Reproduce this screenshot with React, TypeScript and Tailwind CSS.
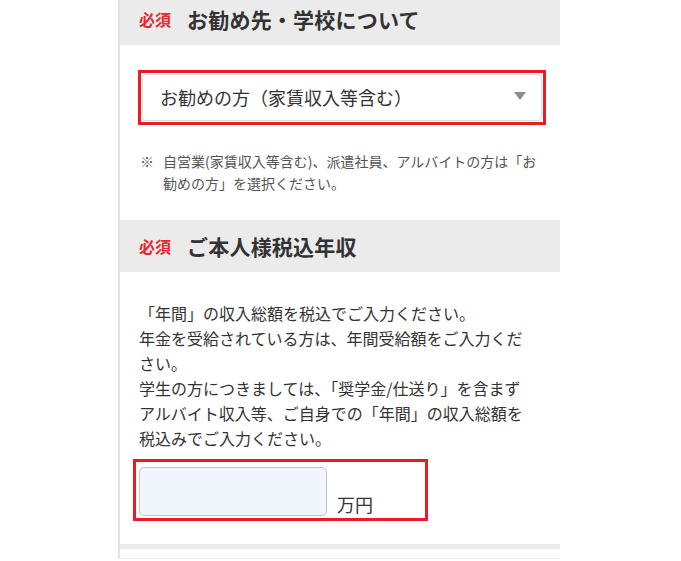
const font = { fontFamily: '"Noto Sans CJK JP", "Noto Sans", sans-serif' };

function SectionHeader({ title }: { title: string }) {
  return (
    <div className="flex h-[52px] items-center bg-[#ebebeb] pl-[19px]">
      <span className="text-[16px] font-bold leading-none text-[#e8262c]">必須</span>
      <h2 className="ml-[16px] text-[21px] font-bold leading-none tracking-[0.01em] text-[#333]">{title}</h2>
    </div>
  );
}

export default function App() {
  return (
    <div className="min-h-[561px] overflow-hidden bg-white" style={font}>
      <div className="ml-[118px] w-[442px] border-l-2 border-[#e4e4e4]">
        {/* 勤め先 */}
        <section className="-mt-[7px]">
          <SectionHeader title="お勧め先・学校について" />
          <div className="pt-[25px] pb-[26px]">
            <div className="ml-[18px] w-[408px] border-[3px] border-[#e81c24] p-[1px]">
              <div className="flex h-[47px] items-center justify-between rounded-[4px] border border-[#dcdcdc] bg-white pl-[17px] pr-[14px]">
                <span className="text-[18px] text-[#333]">お勧めの方（家賃収入等含む）</span>
                <svg width="14" height="10" viewBox="0 0 14 10" className="mt-[-4px]">
                  <path d="M1 1h12L7 9z" fill="#8c8c8c" />
                </svg>
              </div>
            </div>
            <div className="mt-[25px] flex pl-[20px] text-[14px] leading-[22px] text-[#555]">
              <span className="w-[23px] shrink-0">※</span>
              <p>
                自営業(家賃収入等含む)、派遣社員、アルバイトの方は「お
                <br />
                勧めの方」を選択ください。
              </p>
            </div>
          </div>
        </section>

        {/* 年収 */}
        <section>
          <SectionHeader title="ご本人様税込年収" />
          <div className="pt-[29px] pb-[23px]">
            <p className="pl-[19px] text-[16px] leading-[25px] text-[#333]">
              「年間」の収入総額を税込でご入力ください。
              <br />
              年金を受給されている方は、年間受給額をご入力くだ
              <br />
              さい。
              <br />
              学生の方につきましては、「奨学金/仕送り」を含まず
              <br />
              アルバイト収入等、ご自身での「年間」の収入総額を
              <br />
              税込みでご入力ください。
            </p>
            <div className="ml-[13px] mt-[8px] flex h-[62px] w-[295px] items-end border-[3px] border-[#e81c24] pb-[2px] pl-[3px]">
              <input
                type="text"
                className="h-[49px] w-[188px] rounded-[5px] border border-[#c4c4c4] bg-[#f1f6fd] outline-none"
              />
              <span className="mb-[3px] ml-[10px] text-[18px] leading-none text-[#333]">万円</span>
            </div>
          </div>
        </section>

        <div className="h-[5px] bg-[#ebebeb]" />
        <div className="h-[10px] border-b border-[#eeeeee]" />
      </div>
    </div>
  );
}
